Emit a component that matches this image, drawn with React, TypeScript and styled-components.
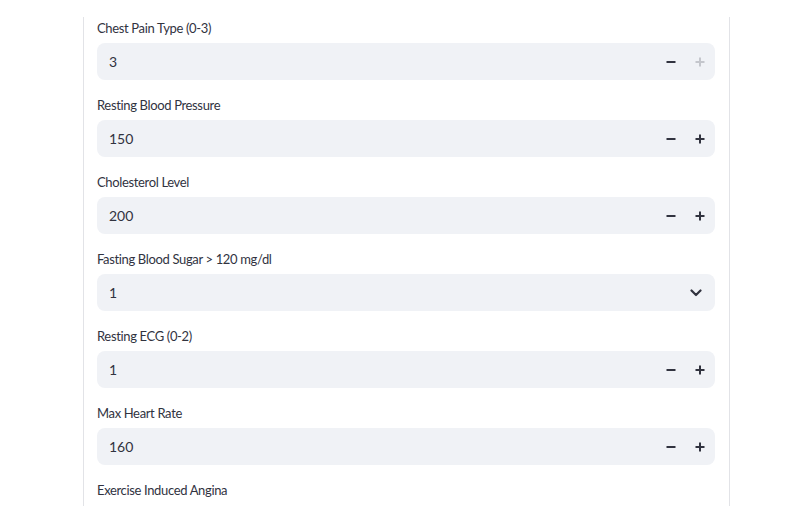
import * as React from 'react';
import styled, { createGlobalStyle } from 'styled-components';

const GlobalStyle = createGlobalStyle`
    html, body {
        margin: 0;
        padding: 0;
        background: #ffffff;
        font-family: "Source Sans Pro", Lato, "Noto Sans", sans-serif;
        color: #31333f;
    }
`

const Page = styled.div`
    padding: 17px 76px 0 83px;
    height: 506px;
    box-sizing: border-box;
    overflow: hidden;
`

const Form = styled.div`
    border-left: 1px solid #e2e3e7;
    border-right: 1px solid #e2e3e7;
    padding: 1px 14px 0 13px;
    display: flex;
    flex-direction: column;
    gap: 15px;
    min-height: 600px;
`

const Field = styled.div`
    display: flex;
    flex-direction: column;
    gap: 5px;
`

const Label = styled.label`
    font-size: 13px;
    letter-spacing: -0.35px;
    line-height: 20px;
    height: 20px;
    color: #31333f;
`

const InputBox = styled.div`
    height: 37px;
    background: #f0f2f6;
    border-radius: 8px;
    display: flex;
    align-items: center;
    padding: 0 1px 0 12px;
`

const Value = styled.span`
    flex: 1;
    font-size: 14px;
    color: #31333f;
`

const StepButton = styled.button<{ $disabled?: boolean }>`
    width: 29px;
    height: 37px;
    border: none;
    background: transparent;
    padding: 0;
    display: flex;
    align-items: center;
    justify-content: center;
    color: ${p => (p.$disabled ? '#c4c6cc' : '#31333f')};
`

const Chevron = styled.span`
    width: 29px;
    margin-right: 4px;
    display: flex;
    align-items: center;
    justify-content: center;
    color: #31333f;
`

const Minus = () => (
    <svg width="10" height="10" viewBox="0 0 10 10">
        <rect x="0.5" y="4" width="9" height="2" fill="currentColor" />
    </svg>
)

const Plus = () => (
    <svg width="10" height="10" viewBox="0 0 10 10">
        <rect x="0.5" y="4" width="9" height="2" fill="currentColor" />
        <rect x="4" y="0.5" width="2" height="9" fill="currentColor" />
    </svg>
)

const Down = () => (
    <svg width="12" height="8" viewBox="0 0 12 8">
        <path d="M1.5 1.5 L6 6 L10.5 1.5" fill="none" stroke="currentColor" strokeWidth="2.2" strokeLinecap="round" strokeLinejoin="round" />
    </svg>
)

interface NumberProps {
    label: string;
    value: string;
    atMax?: boolean;
}

const NumberInput: React.FC<NumberProps> = ({ label, value, atMax }) => (
    <Field>
        <Label>{label}</Label>
        <InputBox>
            <Value>{value}</Value>
            <StepButton><Minus /></StepButton>
            <StepButton $disabled={atMax}><Plus /></StepButton>
        </InputBox>
    </Field>
)

const SelectBox: React.FC<{ label: string; value: string }> = ({ label, value }) => (
    <Field>
        <Label>{label}</Label>
        <InputBox>
            <Value>{value}</Value>
            <Chevron><Down /></Chevron>
        </InputBox>
    </Field>
)

export default function App() {
    return (
        <>
            <GlobalStyle />
            <Page>
                <Form>
                    <NumberInput label="Chest Pain Type (0-3)" value="3" atMax />
                    <NumberInput label="Resting Blood Pressure" value="150" />
                    <NumberInput label="Cholesterol Level" value="200" />
                    <SelectBox label="Fasting Blood Sugar > 120 mg/dl" value="1" />
                    <NumberInput label="Resting ECG (0-2)" value="1" />
                    <NumberInput label="Max Heart Rate" value="160" />
                    <Field>
                        <Label>Exercise Induced Angina</Label>
                    </Field>
                </Form>
            </Page>
        </>
    )
}
